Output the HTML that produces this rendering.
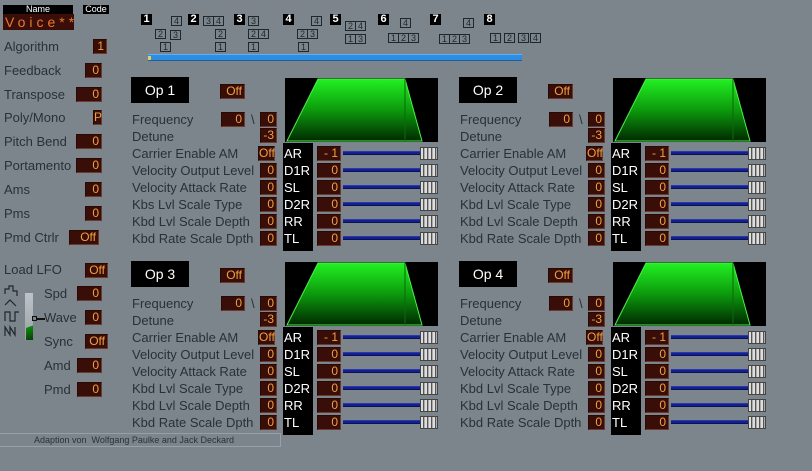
<!DOCTYPE html>
<html><head><meta charset="utf-8">
<style>
*{margin:0;padding:0;box-sizing:border-box}
body{width:812px;height:471px;overflow:hidden;background:#7c848c;font-family:"Liberation Sans",sans-serif;position:relative}
.a{position:absolute}
.lbl{position:absolute;color:#283038;font-size:13px;line-height:14px;white-space:nowrap}
.op .lbl{color:#343c45}
.v{position:absolute;background:#3a0e08;border:1px solid #2a0804;border-right-color:#6a3a30;border-bottom-color:#6a3a30;color:#f0a040;font-size:12px;line-height:12px;text-align:right;padding-right:2px;height:15px}
.blk{position:absolute;background:#000;color:#fff}
.ab{position:absolute;width:11px;height:10px;border:1px solid #1e262e;font-size:9px;line-height:8px;text-align:center;color:#1e262e}
.an{position:absolute;width:11px;height:11px;background:#000;color:#fff;font-size:11px;font-weight:bold;line-height:11px;text-align:center}
.thumb{position:absolute;width:18px;height:13px;background:repeating-linear-gradient(90deg,#ddd 0 2px,#555 2px 3px,#aaa 3px 4px);border:1px solid #444}
</style></head><body>
<div class="blk" style="left:3px;top:5px;width:70px;height:9px;font-size:9px;line-height:9px;text-align:center">Name</div>
<div class="blk" style="left:83px;top:5px;width:26px;height:9px;font-size:9px;line-height:9px;text-align:center">Code</div>
<div class="a" style="left:3px;top:14px;width:71px;height:16px;background:#3a0e08;color:#e87830;font-size:14px;letter-spacing:4px;line-height:16px;padding-left:2px">Voice**</div>
<div class="a" style="left:148px;top:54px;width:374px;height:7px;background:#2f8de0;border-top:1px solid #5ab0ff;border-bottom:1px solid #1a5fa0"></div>
<div class="a" style="left:148px;top:56px;width:3px;height:4px;background:#e0d060"></div>
<div class="a" style="left:0;top:433px;width:281px;height:14px;border:1px solid #95a0aa;border-left:none"></div>
<div class="lbl" style="left:34px;top:434px;font-size:9px;line-height:12px;color:#2a3139">Adaption von &nbsp;Wolfgang Paulke and Jack Deckard</div>
<svg class="a" style="left:3px;top:284px" width="20" height="60"><g fill="none" stroke="#1e262e" stroke-width="1.2"><path d="M2 10V5h4V2h4v5h4v5"/><path d="M2 21l5-5 6 6"/><path d="M2 37V28h5v9h5v-9h4"/><path d="M2 52V43l5 8V43l5 8V43"/></g></svg>
<div class="a" style="left:25px;top:293px;width:8px;height:47px;background:linear-gradient(#bcc4ca,#9aa2a8);"></div>
<div class="a" style="left:26px;top:318px;width:7px;height:22px;background:linear-gradient(160deg,transparent 40%,#0f8a10 41%,#083a08)"></div>
<div class="a" style="left:32px;top:316px;width:5px;height:5px;border:1px solid #111"></div>
<div class="a" style="left:37px;top:318px;width:8px;height:2px;background:#111"></div>
<div id="root"></div>
<script>
var H='';
function L(x,y,t,s){H+='<div class="lbl" style="left:'+x+'px;top:'+y+'px;'+(s||'')+'">'+t+'</div>';}
function V(x,y,w,t){H+='<div class="v" style="left:'+x+'px;top:'+y+'px;width:'+w+'px">'+t+'</div>';}
[['Algorithm',47,93,14,'1'],['Feedback',71,85,17,'0'],['Transpose',95,76,26,'0'],['Poly/Mono',118,93,9,'P'],['Pitch Bend',142,76,26,'0'],['Portamento',166,76,26,'0'],['Ams',190,85,17,'0'],['Pms',214,85,17,'0'],['Pmd Ctrlr',238,69,30,'Off']].forEach(function(r){L(4,r[1]-7,r[0]);V(r[2],r[1]-8,r[3],r[4]);});
L(4,263,'Load LFO');V(85,263,23,'Off');
[['Spd',294,77,25,'0'],['Wave',318,85,17,'0'],['Sync',342,85,23,'Off'],['Amd',366,77,25,'0'],['Pmd',390,77,25,'0']].forEach(function(r){L(44,r[1]-7,r[0]);V(r[2],r[1]-8,r[3],r[4]);});
[[141,14,'1'],[188,14,'2'],[234,14,'3'],[283,14,'4'],[330,14,'5'],[378,14,'6'],[430,14,'7'],[484,14,'8']].forEach(function(a){H+='<div class="an" style="left:'+a[0]+'px;top:'+a[1]+'px">'+a[2]+'</div>';});
[[171,16,4],[155,29,2],[170,30,3],[160,42,1],[203,16,3],[213,16,4],[215,29,2],[215,42,1],[248,16,3],[248,29,2],[258,29,4],[248,42,1],[311,16,4],[297,29,2],[307,29,3],[298,42,1],[345,21,2],[355,21,4],[345,34,1],[355,34,3],[400,18,4],[388,33,1],[398,33,2],[408,33,3],[463,18,4],[439,34,1],[449,34,2],[459,34,3],[490,33,1],[504,33,2],[518,33,3],[530,33,4]].forEach(function(b){H+='<div class="ab" style="left:'+b[0]+'px;top:'+b[1]+'px">'+b[2]+'</div>';});
function OP(ox,oy,n,alt){
 H+='<div class="blk" style="left:'+(ox+1)+'px;top:'+(oy-1)+'px;width:58px;height:26px;font-size:14px;line-height:26px;text-align:center">Op '+n+'</div>';
 V(ox+90,oy+6,25,'Off');
 H+='<svg class="a" style="left:'+(ox+155)+'px;top:'+oy+'px" width="153" height="64"><defs><linearGradient id="g'+n+'" x1="0" y1="0" x2="0" y2="1"><stop offset="0" stop-color="#22f022"/><stop offset="0.5" stop-color="#0c9a0c"/><stop offset="1" stop-color="#012a01"/></linearGradient></defs><rect width="153" height="64" fill="#000"/><path d="M2 63L33 1H120L137 63Z" fill="url(#g'+n+')" stroke="#4cf04c"/><path d="M120 1V63" stroke="#0a6a0a"/></svg>';
 L(ox+2,oy+35,'Frequency');V(ox+91,oy+34,24,'0');L(ox+121,oy+35,'\\');V(ox+130,oy+34,17,'0');
 L(ox+2,oy+52,'Detune');V(ox+130,oy+50,17,'-3');
 var labs=['Carrier Enable AM',alt?' Velocity Output Level':'Velocity Output Level','Velocity Attack Rate',n==1?'Kbs Lvl Scale Type':'Kbd Lvl Scale Type','Kbd Lvl Scale Depth','Kbd Rate Scale Dpth'];
 H+='<div class="blk" style="left:'+(ox+153)+'px;top:'+(oy+65)+'px;width:30px;height:108px"></div>';
 var en=['AR','D1R','SL','D2R','RR','TL'];
 for(var i=0;i<6;i++){var y=oy+69+i*17;
  L(ox+2,y,labs[i]);
  if(i==0)V(ox+128,y-1,17,'Off');else V(ox+130,y-1,17,'0');
  H+='<div class="a" style="left:'+(ox+154)+'px;top:'+(y-1)+'px;color:#fff;font-size:13px;line-height:16px">'+en[i]+'</div>';
  V(ox+187,y-1,24,i==0?'- 1':'0');
  H+='<div class="a" style="left:'+(ox+213)+'px;top:'+(y+4)+'px;width:78px;height:4px;background:#141f90;border-top:1px solid #2a38b0;border-bottom:1px solid #0a1050"></div>';
  H+='<div class="thumb" style="left:'+(ox+290)+'px;top:'+(y)+'px"></div>';
 }
}
OP(130,78,1,false);OP(458,78,2,false);OP(130,262,3,true);OP(458,262,4,true);
document.getElementById('root').innerHTML=H;
</script>
</body></html>
